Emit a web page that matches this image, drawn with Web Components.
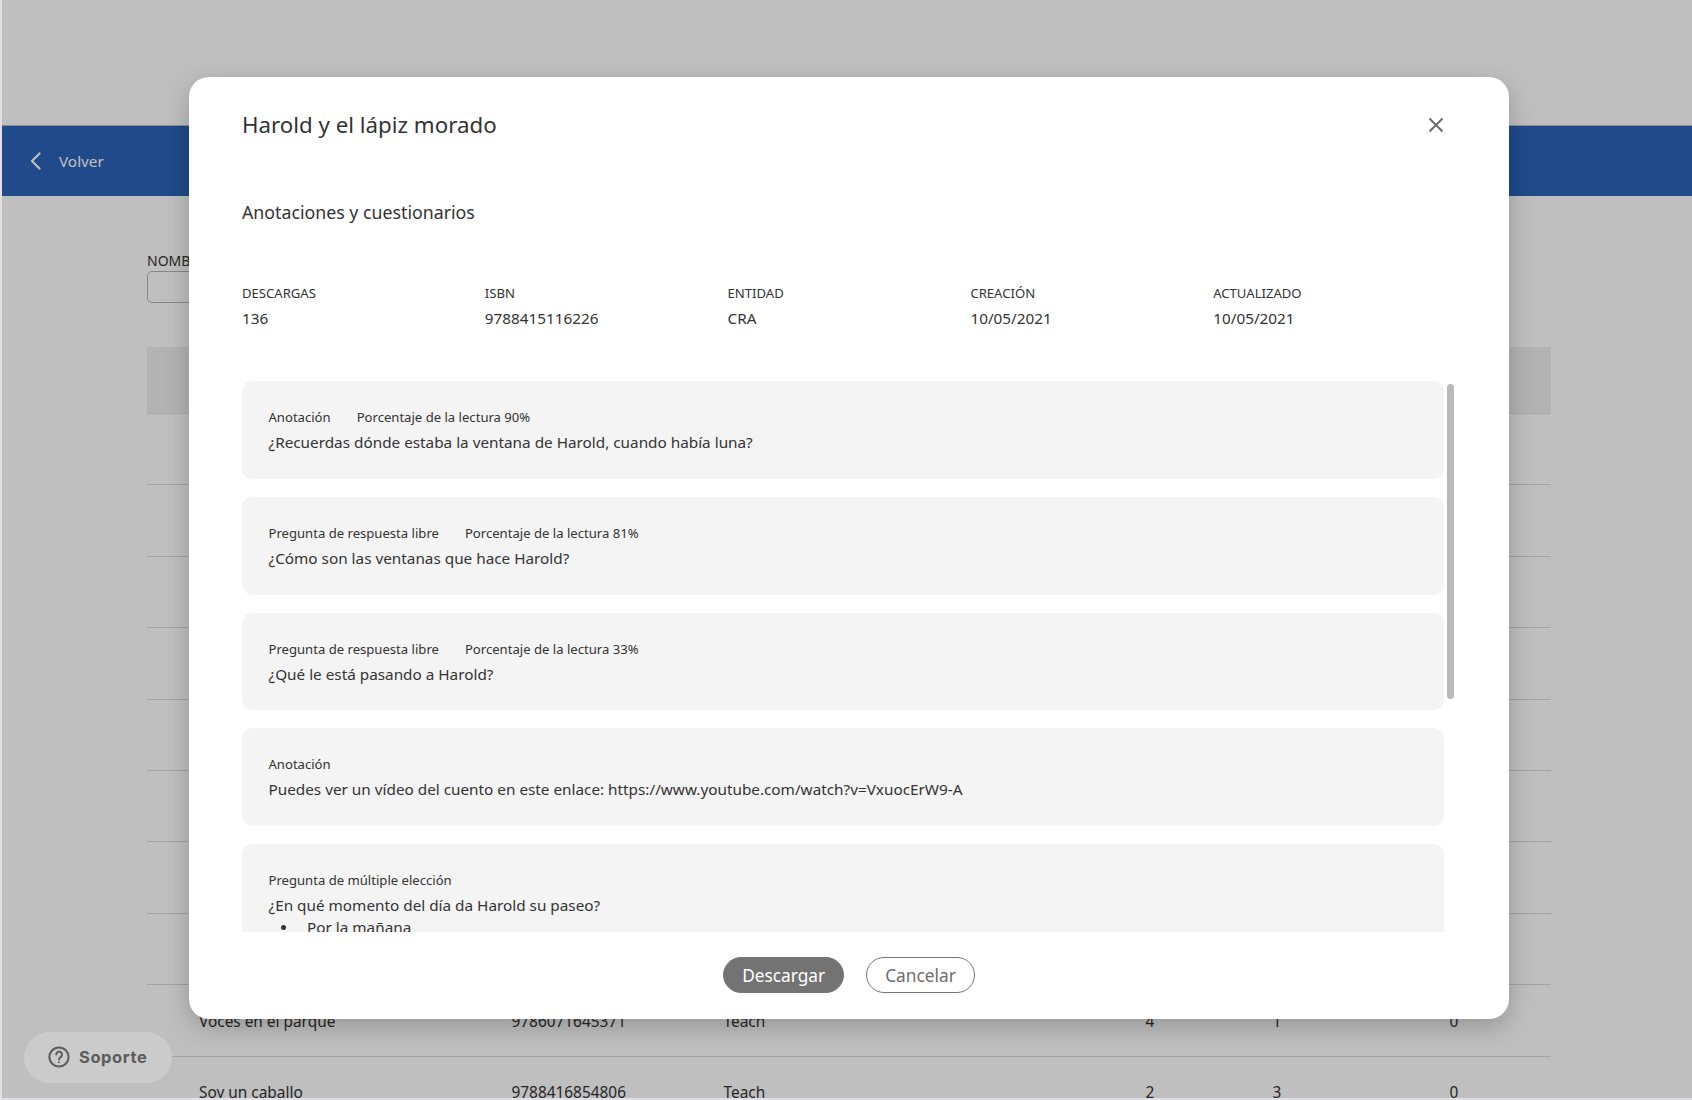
<!DOCTYPE html>
<html lang="es"><head><meta charset="utf-8"><title>Harold y el lápiz morado</title>
<style>
html,body{margin:0;padding:0;height:100%;overflow:hidden;background:#dfdfe5;}
body{font-family:"Noto Sans",sans-serif;color:#333;}
</style></head>
<body>
<app-shell>
  <back-bar slot="page">Volver</back-bar>
  <filter-field slot="page">NOMBRE</filter-field>
  <book-table slot="page">
    <book-row></book-row><book-row></book-row><book-row></book-row><book-row></book-row>
    <book-row></book-row><book-row></book-row><book-row></book-row><book-row></book-row>
    <book-row><span>Voces en el parque</span><span>9786071645371</span><span>Teach</span><span>4</span><span>1</span><span>0</span></book-row>
    <book-row><span>Soy un caballo</span><span>9788416854806</span><span>Teach</span><span>2</span><span>3</span><span>0</span></book-row>
  </book-table>
  <book-modal slot="modal" heading="Harold y el lápiz morado" subheading="Anotaciones y cuestionarios">
    <meta-item slot="meta" label="DESCARGAS">136</meta-item>
    <meta-item slot="meta" label="ISBN">9788415116226</meta-item>
    <meta-item slot="meta" label="ENTIDAD">CRA</meta-item>
    <meta-item slot="meta" label="CREACIÓN">10/05/2021</meta-item>
    <meta-item slot="meta" label="ACTUALIZADO">10/05/2021</meta-item>
    <note-card kind="Anotación" progress="Porcentaje de la lectura 90%">¿Recuerdas dónde estaba la ventana de Harold, cuando había luna?</note-card>
    <note-card kind="Pregunta de respuesta libre" progress="Porcentaje de la lectura 81%">¿Cómo son las ventanas que hace Harold?</note-card>
    <note-card kind="Pregunta de respuesta libre" progress="Porcentaje de la lectura 33%">¿Qué le está pasando a Harold?</note-card>
    <note-card kind="Anotación">Puedes ver un vídeo del cuento en este enlace: https://www.youtube.com/watch?v=VxuocErW9-A</note-card>
    <note-card kind="Pregunta de múltiple elección">¿En qué momento del día da Harold su paseo?
      <choice-item slot="extra">Por la mañana</choice-item>
      <choice-item slot="extra">Por la tarde</choice-item>
    </note-card>
    <pill-button slot="actions" variant="primary">Descargar</pill-button>
    <pill-button slot="actions">Cancelar</pill-button>
  </book-modal>
  <support-chip slot="chip">Soporte</support-chip>
</app-shell>
<script>
function def(name, html, init){
  customElements.define(name, class extends HTMLElement{
    constructor(){super();const r=this.attachShadow({mode:'open'});r.innerHTML=html;}
    connectedCallback(){ if(init) init(this,this.shadowRoot); }
  });
}
def('app-shell',`<style>
:host{display:block;position:relative;width:1692px;height:1100px;box-sizing:border-box;padding:0 0 2px 2px;}
.stage{position:relative;height:100%;overflow:hidden;background:#fff;}
.page{display:flex;flex-direction:column;padding-top:126px;}
.overlay{position:absolute;inset:0;background:rgba(0,0,0,.25);}
.m{position:absolute;left:187px;top:77px;}
.c{position:absolute;left:22px;top:1032px;}
</style><div class="stage"><div class="page"><slot name="page"></slot></div><div class="overlay"></div>
<div class="m"><slot name="modal"></slot></div><div class="c"><slot name="chip"></slot></div></div>`);

def('back-bar',`<style>
:host{display:flex;align-items:center;height:70px;box-sizing:border-box;padding:0 0 1px 28px;background:#2b63b9;color:#fff;font-size:15.3px;box-shadow:0 -1px 0 #b8bdc8;}
svg{display:block;margin-right:18px;}
</style><svg width="11" height="18" viewBox="0 0 11 18" fill="none" stroke="#fff" stroke-width="2.2" stroke-linecap="round" stroke-linejoin="round"><path d="M9.5 1.5 2 9l7.5 7.5"/></svg><slot></slot>`);

def('filter-field',`<style>
:host{display:block;margin:55px 0 0 145px;font-size:14px;line-height:20px;color:#333;height:96px;}
.i{width:300px;height:32px;box-sizing:border-box;border:1.5px solid #b5b5b5;border-radius:5px;background:#fff;}
</style><slot></slot><div class="i"></div>`);

def('book-table',`<style>
:host{display:block;margin-left:145px;width:1404px;}
.h{height:67px;background:#efefef;border-bottom:1px solid #e0e0e0;box-sizing:border-box;}
</style><div class="h"></div><slot></slot>`);

def('book-row',`<style>
:host{display:grid;grid-template-columns:312.5px 212px 422px 127px 177px 1fr;height:71.4px;box-sizing:border-box;border-bottom:1px solid #d9d9d9;padding:2px 0 0 52px;align-items:center;font-size:15.4px;color:#333;}
</style><slot></slot>`);

def('book-modal',`<style>
:host{display:flex;flex-direction:column;width:1320px;height:942px;box-sizing:border-box;background:#fff;border-radius:20px;box-shadow:0 8px 26px rgba(0,0,0,.22);padding:0 0 0 53px;color:#333;}
header{display:flex;justify-content:space-between;align-items:center;height:95px;padding-right:65px;flex:none;}
h2{margin:0;font-size:22.3px;font-weight:400;line-height:30px;color:#333;}
svg{display:block;margin-right:0;}
h3{margin:0;flex:none;height:48px;padding-top:24px;font-size:17.75px;font-weight:400;line-height:32px;color:#333;}
.meta{display:grid;grid-template-columns:repeat(5,242.8px);flex:none;margin-top:37px;height:100px;}
.scroll{position:relative;height:551px;flex:none;width:1214px;overflow:hidden;}
.list{display:flex;flex-direction:column;gap:18px;width:1202px;}
.thumb{position:absolute;left:1205px;top:3px;width:7px;height:315px;border-radius:4px;background:#b9b8bd;}
footer{display:flex;justify-content:center;gap:22px;padding-top:25px;margin-left:-53px;}
</style>
<header><h2 id="t"></h2><svg width="16" height="16" viewBox="0 0 16 16" fill="none" stroke="#6b6b6b" stroke-width="2"><path d="M1.5 1.5l13 13M14.5 1.5l-13 13"/></svg></header>
<h3 id="s"></h3>
<div class="meta"><slot name="meta"></slot></div>
<div class="scroll"><div class="list"><slot></slot></div><div class="thumb"></div></div>
<footer><slot name="actions"></slot></footer>`,(h,r)=>{
  r.getElementById('t').textContent=h.getAttribute('heading');
  r.getElementById('s').textContent=h.getAttribute('subheading');
});

def('meta-item',`<style>
:host{display:block;color:#333;}
.l{font-size:13.1px;line-height:20px;height:26px;padding-top:2px;box-sizing:border-box;}
.v{font-size:15.3px;line-height:22px;}
</style><div class="l" id="l"></div><div class="v"><slot></slot></div>`,(h,r)=>{r.getElementById('l').textContent=h.getAttribute('label');});

def('note-card',`<style>
:host{display:block;box-sizing:border-box;min-height:97.8px;background:#f4f4f4;border-radius:10px;padding:26px 26.5px 0;flex:none;color:#333;}
.top{display:flex;gap:26px;font-size:13.1px;line-height:20px;height:22px;}
.q{font-size:15.3px;line-height:26px;height:24px;}
</style><div class="top"><span id="k"></span><span id="p"></span></div><div class="q"><slot></slot></div><slot name="extra"></slot>`,(h,r)=>{
  r.getElementById('k').textContent=h.getAttribute('kind');
  const p=h.getAttribute('progress'); if(p) r.getElementById('p').textContent=p; else r.getElementById('p').remove();
});

def('choice-item',`<style>
:host{display:flex;align-items:center;font-size:15.3px;line-height:22px;color:#333;padding-left:12.5px;}
i{display:block;width:5px;height:5px;border-radius:50%;background:#333;margin-right:21px;flex:none;}
</style><i></i><slot></slot>`);

def('pill-button',`<style>
:host{display:flex;align-items:center;justify-content:center;height:36px;box-sizing:border-box;border-radius:18px;font-size:17.3px;padding:0 18px;border:1px solid #757575;background:#fff;color:#6d6d6d;}
:host([variant=primary]){background:#737373;color:#fff;}
</style><slot></slot>`);

def('support-chip',`<style>
:host{display:flex;align-items:center;gap:9px;width:148px;height:51px;box-sizing:border-box;padding:0 0 2px 24px;border-radius:26px;background:#cbcbcb;color:#5c5c5c;font:700 16.5px Inter,sans-serif;letter-spacing:.6px;}
svg{display:block;}
</style><svg width="22" height="22" viewBox="0 0 22 22" fill="none" stroke="#5c5c5c" stroke-width="2"><circle cx="11" cy="11" r="9.6"/><path d="M8.2 8.6a2.9 2.9 0 1 1 4.6 2.3c-1.1.8-1.8 1.3-1.8 2.6" stroke-linecap="round"/><circle cx="11" cy="16.3" r=".6" fill="#5c5c5c" stroke-width="1"/></svg><slot></slot>`);
</script>
</body></html>
